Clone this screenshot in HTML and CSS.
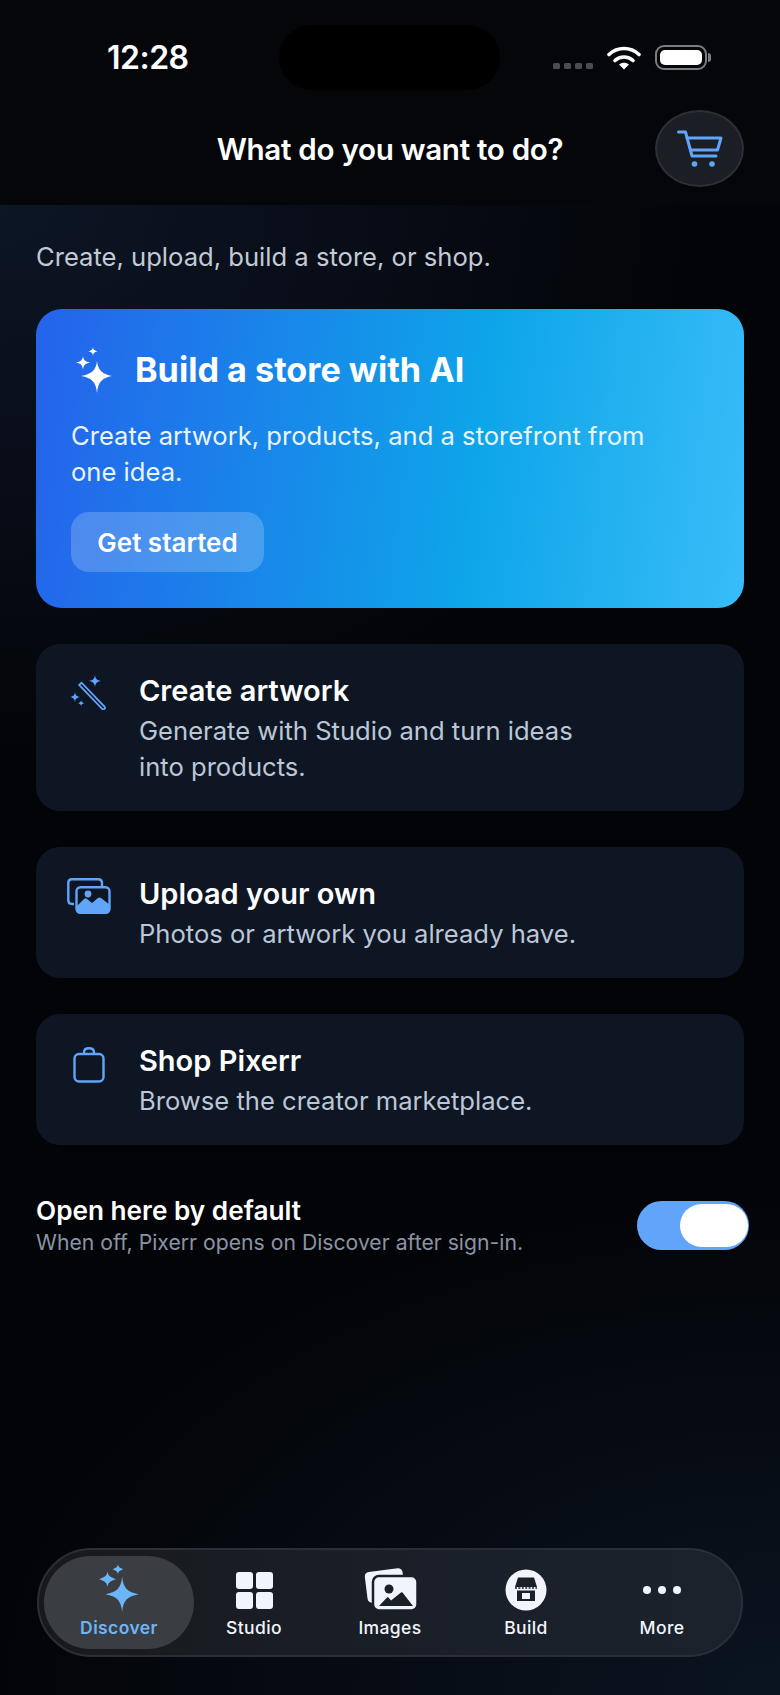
FILE: index.html
```html
<!DOCTYPE html>
<html lang="en">
<head>
    <meta charset="UTF-8">
    <meta name="viewport" content="width=device-width, initial-scale=1.0">
    <title>Pixerr</title>
    <link rel="stylesheet" href="styles.css">
</head>
<body>
    <div class="page">
        <header class="top">
            <div class="status">
                <span class="time">12:28</span>
                <div class="island"></div>
                <div class="status-icons">
                    <div class="signal"><i></i><i></i><i></i><i></i></div>
                    <svg class="wifi" width="34" height="25" viewBox="0 0 34 25">
                        <path d="M2 9.5C10.500 1.500 23.500 1.500 32 9.500" fill="none" stroke="#fff" stroke-width="3.600" stroke-linecap="round"/>
                        <path d="M8 15.500C13 10.800 21 10.800 26 15.500" fill="none" stroke="#fff" stroke-width="3.600" stroke-linecap="round"/>
                        <path d="M12 19.500C14.800 17 19.200 17 22 19.500L17 24.500Z" fill="#fff"/>
                    </svg>
                    <div class="battery"><div class="battery-fill"></div></div>
                </div>
            </div>
            <div class="title-bar">
                <h1>What do you want to do?</h1>
                <button class="cart">
                    <svg width="46" height="38" viewBox="0 0 46 38" fill="none" stroke="#60a5fa" stroke-width="3" stroke-linecap="round" stroke-linejoin="round">
                        <path d="M1.500 2H8.500L15 26H39"/>
                        <path d="M10 8H44L40.500 20H13.500"/>
                        <circle cx="17.500" cy="34" r="2.800" fill="#60a5fa" stroke="none"/>
                        <circle cx="35" cy="34" r="2.800" fill="#60a5fa" stroke="none"/>
                    </svg>
                </button>
            </div>
        </header>

        <main class="content">
            <p class="intro">Create, upload, build a store, or shop.</p>

            <section class="hero">
                <div class="hero-head">
                    <svg width="44" height="48" viewBox="0 0 44 48" fill="#fff">
                        <path d="M25 15C26 24 30 28 40 30C30 32 26 36 25 47C24 36 20 32 9 30C20 28 24 24 25 15Z"/>
                        <path d="M11 10C11.500 14 13 15.500 18 16.500C13 17.500 11.500 19 11 24C10.500 19 9 17.500 4 16.500C9 15.500 10.500 14 11 10Z"/>
                        <path d="M21 1C21.300 3.500 22 4.200 25.500 5.300C22 6.400 21.300 7 21 10C20.700 7 20 6.400 16.500 5.300C20 4.200 20.700 3.500 21 1Z"/>
                    </svg>
                    <h2>Build a store with AI</h2>
                </div>
                <p>Create artwork, products, and a storefront from one idea.</p>
                <button class="hero-btn">Get started</button>
            </section>

            <section class="row">
                <div class="row-icon">
                    <svg class="wand-icon" width="37" height="37" viewBox="0 0 40 40" fill="#60a5fa">
                        <path d="M10 13L12.500 10.500L37.500 36.500C38.500 38 36.500 40 35 39Z" fill="none" stroke="#60a5fa" stroke-width="2"/>
                        <path d="M27 2C27.500 6.500 28.800 7.800 33.500 8.700C28.800 9.600 27.500 11 27 15.500C26.500 11 25.200 9.600 20.500 8.700C25.200 7.800 26.500 6.500 27 2Z"/>
                        <path d="M5.400 20.500C5.800 24 6.800 25 10.800 26C6.800 27 5.800 28 5.400 31.500C5 28 4 27 0 26C4 25 5 24 5.400 20.500Z"/>
                        <path d="M12 29.300C12.300 31.300 12.800 32 15.300 32.600C12.800 33.200 12.300 33.900 12 36C11.700 33.900 11.200 33.200 8.700 32.600C11.200 32 11.700 31.300 12 29.300Z"/>
                    </svg>
                </div>
                <div class="row-text">
                    <h3>Create artwork</h3>
                    <p>Generate with Studio and turn ideas<br>into products.</p>
                </div>
            </section>

            <section class="row">
                <div class="row-icon">
                    <svg class="upload-icon" width="44" height="36" viewBox="0 0 44 36" fill="none" stroke="#60a5fa" stroke-width="2.400">
                        <path d="M7 26H5C2.800 26 1.300 24.500 1.300 22V5C1.300 2.800 2.800 1.300 5 1.300H31C33.500 1.300 35 2.800 35 5V9"/>
                        <rect x="9.500" y="9.200" width="33" height="25.600" rx="4"/>
                        <path d="M9 29L17 21C18 20 19 20 20 21L25 25L31 20C32 19.300 33 19.300 34 20L43 27V31C43 33.500 41.500 35.500 39 35.500H13C10.500 35.500 9 33.500 9 31Z" fill="#60a5fa" stroke="none"/>
                        <circle cx="21" cy="16" r="3.400" fill="#60a5fa" stroke="none"/>
                    </svg>
                </div>
                <div class="row-text">
                    <h3>Upload your own</h3>
                    <p>Photos or artwork you already have.</p>
                </div>
            </section>

            <section class="row">
                <div class="row-icon">
                    <svg class="bag-icon" width="32" height="36" viewBox="0 0 32 36" fill="none" stroke="#60a5fa" stroke-width="2.400">
                        <rect x="1.500" y="7" width="29" height="27.500" rx="4.500"/>
                        <path d="M11 7V5.500C11 2.800 13 1.300 16 1.300C19 1.300 21 2.800 21 5.500V7"/>
                    </svg>
                </div>
                <div class="row-text">
                    <h3>Shop Pixerr</h3>
                    <p>Browse the creator marketplace.</p>
                </div>
            </section>

            <div class="default-row">
                <div>
                    <div class="default-title">Open here by default</div>
                    <div class="default-sub">When off, Pixerr opens on Discover after sign-in.</div>
                </div>
                <div class="toggle"><div class="knob"></div></div>
            </div>
        </main>

        <nav class="tabs">
            <div class="tab active">
                <svg width="42" height="48" viewBox="0 0 40 46" fill="#6db6f6">
                    <path d="M23 12C24 23 28 27 39 29C28 31 24 35 23 46C22 35 18 31 7 29C18 27 22 23 23 12Z"/>
                    <path d="M9 7C9.500 11 11 12.500 17 14.500C11 16.500 9.500 18 9 22C8.500 18 7 16.500 1 14.500C7 12.500 8.500 11 9 7Z"/>
                    <path d="M19 0C19.300 2.500 20 3.300 24 5C20 6.700 19.300 7.500 19 10C18.700 7.500 18 6.700 14 5C18 3.300 18.700 2.500 19 0Z"/>
                </svg>
                <span>Discover</span>
            </div>
            <div class="tab">
                <div class="grid-icon"><i></i><i></i><i></i><i></i></div>
                <span>Studio</span>
            </div>
            <div class="tab">
                <svg class="images-icon" width="54" height="44" viewBox="0 0 54 44">
                    <rect x="2" y="3" width="38" height="31" rx="4.500" fill="#f1f5fb" transform="rotate(-7 21 18)"/>
                    <rect x="9" y="9" width="44.500" height="34.500" rx="6" fill="#f1f5fb" stroke="#1a2029" stroke-width="2.500"/>
                    <path d="M15 39L23 30.500C23.500 30 24 30 24.500 30.500L27 33.500L37 25.500C37.500 25 38 25 38.500 25.500L49 39Z" fill="#1a2029"/>
                    <circle cx="25" cy="22" r="4.500" fill="#1a2029"/>
                </svg>
                <span>Images</span>
            </div>
            <div class="tab">
                <svg width="42" height="42" viewBox="0 0 42 42">
                    <circle cx="21" cy="21" r="20.500" fill="#f1f5fb"/>
                    <path d="M13 8.500H29L32 18H10Z" fill="#1a2029"/>
                    <path d="M10 19H32" stroke="#1a2029" stroke-width="1.500" stroke-dasharray="2 1.400"/>
                    <path d="M12 21.500H30V32H12Z" fill="#1a2029"/>
                    <rect x="17" y="24" width="8" height="6" fill="#f1f5fb"/>
                </svg>
                <span>Build</span>
            </div>
            <div class="tab">
                <div class="dots"><i></i><i></i><i></i></div>
                <span>More</span>
            </div>
        </nav>
    </div>
</body>
</html>
```

FILE: styles.css
```css
* {
    box-sizing: border-box;
}
body {
    margin: 0;
    font-family: 'Inter', 'Liberation Sans', sans-serif;
    background-color: #030408;
    color: #fff;
}
h1, h2, h3, p {
    margin: 0;
}
.page {
    width: 780px;
    height: 1695px;
    display: flex;
    flex-direction: column;
    overflow: hidden;
    background:
        radial-gradient(700px 560px at 0 200px, #0d1626 0%, rgba(13, 22, 38, 0) 100%),
        radial-gradient(800px 500px at 780px 1695px, #0a1420 0%, rgba(10, 20, 32, 0) 100%),
        #030408;
}

/* Status bar + title */
.top {
    height: 205px;
    background-color: #05060a;
    padding: 0 36px;
}
.status {
    height: 110px;
    display: flex;
    align-items: flex-start;
    position: relative;
}
.time {
    margin: 39px 0 0 71px;
    font-size: 32px;
    line-height: 38px;
    font-weight: 600;
    letter-spacing: -0.5px;
}
.island {
    position: absolute;
    left: 243px;
    top: 25px;
    width: 221px;
    height: 65px;
    border-radius: 33px;
    background-color: #000;
}
.status-icons {
    margin: 45px 37px 0 auto;
    display: flex;
    align-items: flex-start;
    gap: 14px;
}
.signal {
    display: flex;
    gap: 4px;
    margin: 18px 0 0;
}
.signal i {
    width: 7px;
    height: 6px;
    border-radius: 1.500px;
    background-color: #4a4c50;
}
.battery {
    width: 52px;
    height: 25px;
    padding: 3px;
    border: 2px solid #7b7d80;
    border-radius: 9px;
    position: relative;
}
.battery:after {
    content: '';
    position: absolute;
    right: -6px;
    top: 6px;
    width: 3px;
    height: 9px;
    border-radius: 0 3px 3px 0;
    background-color: #7b7d80;
}
.battery-fill {
    height: 100%;
    border-radius: 5px;
    background-color: #fff;
}
.title-bar {
    position: relative;
    display: flex;
    justify-content: center;
}
.title-bar h1 {
    margin-top: 20px;
    font-size: 29.600px;
    line-height: 38px;
    font-weight: 600;
    letter-spacing: -0.3px;
}
.cart {
    position: absolute;
    right: 0;
    top: 0;
    width: 89px;
    height: 77px;
    padding: 0;
    border: 2px solid #2c2f35;
    border-radius: 50%;
    background-color: #1b1e24;
    display: flex;
    align-items: center;
    justify-content: center;
}

/* Main content */
.content {
    padding: 34px 36px 0;
}
.intro {
    font-size: 25.600px;
    line-height: 36px;
    color: #c3cad6;
    margin-bottom: 34px;
}
.hero {
    height: 299px;
    padding: 37px 35px 0;
    border-radius: 26px;
    background: linear-gradient(97deg, #2563eb 0%, #0ea5e9 62%, #38bdf8 100%);
    margin-bottom: 36px;
}
.hero-head {
    display: flex;
    align-items: center;
    gap: 19px;
}
.hero-head svg {
    margin-left: 1px;
}
.hero h2 {
    font-size: 34.200px;
    line-height: 48px;
    font-weight: 700;
}
.hero p {
    margin-top: 24px;
    font-size: 25.600px;
    line-height: 36px;
    color: #eaf4ff;
    max-width: 600px;
}
.hero-btn {
    display: block;
    margin-top: 22px;
    width: 193px;
    height: 60px;
    border: 0;
    border-radius: 18px;
    background-color: rgba(255, 255, 255, 0.2);
    color: #fff;
    font-family: inherit;
    font-size: 26px;
    font-weight: 600;
}
.row {
    display: flex;
    padding: 29px 36px 26.500px 0;
    border-radius: 24px;
    background-color: #0e1624;
    margin-bottom: 36px;
}
.row-icon {
    width: 103px;
    flex: none;
    display: flex;
    justify-content: center;
    align-items: flex-start;
    padding-left: 2px;
}
.upload-icon {
    margin-top: 2px;
}
.bag-icon {
    margin-top: 4px;
}
.row h3 {
    font-size: 29px;
    line-height: 36px;
    font-weight: 600;
    margin-bottom: 4px;
}
.row p {
    font-size: 25.600px;
    line-height: 35.500px;
    color: #bcc6d6;
}
.default-row {
    margin-top: 49px;
    display: flex;
    align-items: center;
    justify-content: space-between;
}
.default-title {
    font-size: 26.200px;
    line-height: 33px;
    font-weight: 600;
}
.default-sub {
    font-size: 21.200px;
    line-height: 30px;
    color: #8a94a4;
}
.toggle {
    width: 112px;
    height: 49px;
    margin-right: -5px;
    padding: 3px 1px;
    border-radius: 25px;
    background-color: #60a5fa;
    display: flex;
    justify-content: flex-end;
}
.knob {
    width: 68px;
    height: 43px;
    border-radius: 22px;
    background-color: #fff;
}

/* Bottom tabs */
.tabs {
    margin: auto 37px 38px;
    height: 109px;
    padding: 6px 11px;
    display: grid;
    grid-template-columns: repeat(5, 136px);
    border: 2px solid #2a2f37;
    border-radius: 55px;
    background: linear-gradient(90deg, #18191d 0%, #1a2029 60%, #1a222c 100%);
}
.tab {
    display: flex;
    flex-direction: column;
    align-items: center;
    justify-content: flex-end;
    padding-bottom: 9px;
    color: #f1f5fb;
    font-size: 17.500px;
    line-height: 24px;
    font-weight: 500;
    letter-spacing: 0.4px;
}
.tab svg, .grid-icon, .dots {
    margin-bottom: 5px;
}
.tab.active svg {
    margin-bottom: 4px;
}
.images-icon {
    margin-left: 1px;
}
.tab.active {
    margin: 0 -8px 0 -6px;
    border-radius: 47px;
    background-color: #3a3d42;
    color: #6db6f6;
    font-weight: 600;
}
.grid-icon {
    display: grid;
    grid-template-columns: 17px 17px;
    gap: 3px;
    padding-bottom: 2px;
}
.grid-icon i {
    height: 17px;
    border-radius: 3px;
    background-color: #f1f5fb;
}
.dots {
    display: flex;
    gap: 7px;
    height: 42px;
    align-items: center;
}
.dots i {
    width: 8px;
    height: 8px;
    border-radius: 50%;
    background-color: #f1f5fb;
}
```
